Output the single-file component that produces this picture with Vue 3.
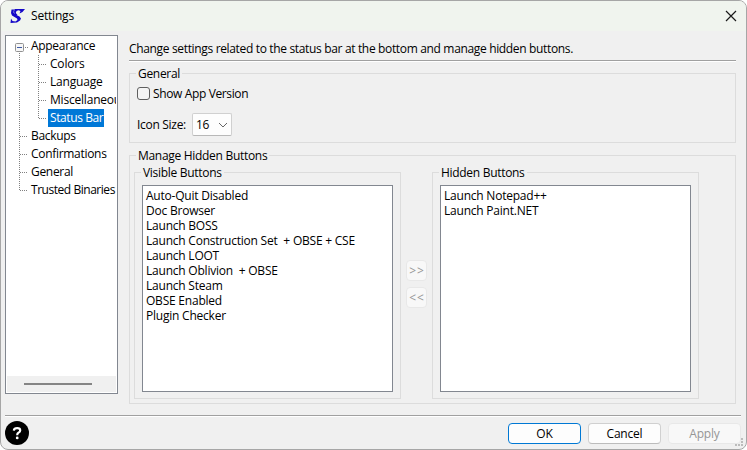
<script setup>
const tree = [
  { label: 'Appearance', level: 0 },
  { label: 'Colors', level: 1 },
  { label: 'Language', level: 1 },
  { label: 'Miscellaneous', level: 1 },
  { label: 'Status Bar', level: 1, selected: true },
  { label: 'Backups', level: 0 },
  { label: 'Confirmations', level: 0 },
  { label: 'General', level: 0 },
  { label: 'Trusted Binaries', level: 0, long: true },
]
const visible = [
  'Auto-Quit Disabled',
  'Doc Browser',
  'Launch BOSS',
  'Launch Construction Set  + OBSE + CSE',
  'Launch LOOT',
  'Launch Oblivion  + OBSE',
  'Launch Steam',
  'OBSE Enabled',
  'Plugin Checker',
]
const hidden = ['Launch Notepad++', 'Launch Paint.NET']
</script>

<template>
  <div class="window">
    <header class="titlebar">
      <svg class="logo" width="16" height="16" viewBox="0 0 16 16">
        <path d="M1.500 1.500H4L3.500 4.500L5.500 6.500L9.500 8.500L11 10.500L10 12.500L7 14.500L0.500 15L1 10.500L2.500 13L5.500 13.500L7.500 12L7 10.500L2 7.500L1 5Z" fill="#1508c8" />
        <path d="M4.500 1H15L12.500 4L9.500 5.500L10.500 3L8.500 2.200L6.500 3L5.800 5L7.500 7L5 7L4 4Z" fill="#1508c8" />
      </svg>
      <span class="caption">Settings</span>
      <svg class="close" width="12" height="12" viewBox="0 0 12 12">
        <path d="M1 1L11 11M11 1L1 11" stroke="#1a1a1a" stroke-width="1.200" fill="none" />
      </svg>
    </header>
    <main class="body">
      <nav class="tree">
        <svg class="lines" width="111" height="170" viewBox="0 0 111 170">
          <g stroke="#808080" stroke-dasharray="1 1" fill="none">
            <path d="M13.500 17V154M19 11.500H22M14 100.500H22M14 118.500H22M14 136.500H22M14 154.500H22" />
            <path d="M32.500 19V82M33 28.500H41M33 46.500H41M33 64.500H41M33 82.500H41" />
          </g>
          <rect x="9.500" y="7.500" width="8" height="8" rx="1" fill="#f7f7f7" stroke="#919191" />
          <path d="M11 11.500H16" stroke="#3d5aa5" />
        </svg>
        <div class="rows">
          <div v-for="n in tree" :key="n.label" class="row" :class="{ child: n.level, selected: n.selected, long: n.long }">
            <span>{{ n.label }}</span>
          </div>
        </div>
        <div class="scroll"><i></i></div>
      </nav>
      <section class="page">
        <p class="intro">Change settings related to the status bar at the bottom and manage hidden buttons.</p>
        <div class="rule"></div>
        <div class="group general">
          <div class="legend">General</div>
          <div class="check"><i></i><span>Show App Version</span></div>
          <div class="size">
            <span>Icon Size:</span>
            <div class="select">
              <span>16</span>
              <svg width="10" height="6" viewBox="0 0 10 6"><path d="M1 1L5 5L9 1" stroke="#666" fill="none" /></svg>
            </div>
          </div>
        </div>
        <div class="group manage">
          <div class="legend">Manage Hidden Buttons</div>
          <div class="columns">
            <div class="group sub">
              <div class="legend">Visible Buttons</div>
              <div class="list"><div v-for="t in visible" :key="t">{{ t }}</div></div>
            </div>
            <div class="movers">
              <button class="btn off">&gt;&gt;</button>
              <button class="btn off">&lt;&lt;</button>
            </div>
            <div class="group sub">
              <div class="legend">Hidden Buttons</div>
              <div class="list"><div v-for="t in hidden" :key="t">{{ t }}</div></div>
            </div>
          </div>
        </div>
      </section>
    </main>
    <div class="rule bottom"></div>
    <footer class="footer">
      <svg class="help" width="24" height="24" viewBox="0 0 24 24">
        <circle cx="12" cy="12" r="12" fill="#000" />
        <path d="M8.800 9.600Q9.200 7.200 12.200 7.200Q15.200 7.200 15.200 9.400Q15.200 10.800 13.400 11.700Q12.200 12.300 12.200 14.300" stroke="#fff" stroke-width="2.200" fill="none" />
        <circle cx="12.200" cy="16.900" r="1.400" fill="#fff" />
      </svg>
      <button class="btn ok">OK</button>
      <button class="btn">Cancel</button>
      <button class="btn off">Apply</button>
    </footer>
    <svg class="grip" width="8" height="8" viewBox="0 0 8 8">
      <path d="M6 0H8V2H6ZM6 3H8V5H6ZM3 6H5V8H3ZM6 6H8V8H6ZM0 6H2V8H0Z" fill="#bcbcbc" />
    </svg>
  </div>
</template>

<style>
body { background: #fff; }
</style>
<style scoped>
* { box-sizing: border-box; }
.window {
  position: relative; width: 747px; height: 450px; overflow: hidden;
  display: flex; flex-direction: column;
  border: 1px solid #a6a6a6; border-radius: 8px; background: #f0f0f0; color: #000;
  font: 12px/16px "Open Sans", "Noto Sans", sans-serif; letter-spacing: -0.3px; white-space: pre;
}
.titlebar { height: 30px; flex: none; display: flex; align-items: center; padding: 0 9px; background: #f0f4ee; }
.caption { margin-left: 5px; flex: 1; letter-spacing: -0.2px; }
.body { display: flex; flex: none; height: 384px; padding: 4px 10px 0 4px; }
.tree { position: relative; width: 113px; height: 359px; border: 1px solid #828790; background: #fff; padding: 1px; display: flex; flex-direction: column; }
.lines { position: absolute; left: 0; top: 0; }
.rows { flex: 1; overflow: hidden; position: relative; }
.row { height: 18px; line-height: 18px; padding-left: 22px; display: flex; }
.row.child { padding-left: 41px; letter-spacing: -0.2px; }
.row span { height: 18px; padding: 0 2px; }
.row.selected { letter-spacing: -0.4px; }
.row.long { letter-spacing: -0.46px; }
.selected span { background: #0078d7; color: #fff; padding-right: 1px; }
.scroll { height: 16px; background: #f0f0f0; display: flex; align-items: center; padding-left: 17px; }
.scroll i { width: 68px; height: 2px; background: #858585; }
.page { margin-left: 11px; flex: 1; display: flex; flex-direction: column; }
.intro { margin: 6px 0 3px; height: 16px; letter-spacing: -0.34px; }
.rule { height: 2px; flex: none; background: #a0a0a0; border-bottom: 1px solid #fff; }
.group { border: 1px solid #dcdcdc; }
.legend { width: fit-content; height: 16px; margin: -8px 0 0 6px; padding: 0 2px; background: #f0f0f0; }
.general { height: 70px; margin-top: 11px; }
.check { display: flex; align-items: flex-start; height: 16px; margin: 4px 0 0 7px; letter-spacing: -0.37px; }
.check i { width: 13px; height: 13px; margin: 1px 3px 0 0; border: 1px solid #5f5f5f; border-radius: 3px; background: #f5f5f5; }
.size { display: flex; align-items: center; margin: 11px 0 0 7px; }
.select { width: 40px; height: 23px; margin-left: 6px; border: 1px solid #d0d0d0; border-bottom-color: #b8b8b8; border-radius: 2px; background: #fdfdfd; display: flex; align-items: center; justify-content: space-between; padding: 0 3px 0 3px; }
.manage { height: 249px; margin-top: 12px; }
.columns { display: flex; margin: 8px 0 0 4px; }
.sub { width: 267px; height: 227px; }
.list { width: 251px; height: 207px; margin: 4px 0 0 7px; padding: 2px 3px; border: 1px solid #828790; background: #fff; line-height: 15px; letter-spacing: -0.22px; }
.movers { width: 31px; padding: 88px 0 0 5px; display: flex; flex-direction: column; gap: 6px; }
.btn { width: 73px; height: 21px; padding: 0; border: 1px solid #d0d0d0; border-bottom-color: #bcbcbc; border-radius: 4px; background: #fdfdfd; font: inherit; letter-spacing: -0.2px; color: #000; }
.btn.ok { border-color: #0078d4; }
.btn.off { border-color: #e8e8e8; background: #f8f8f8; color: #969696; }
.movers .btn { width: 21px; letter-spacing: 1px; padding-left: 1px; }
.bottom { margin: 0 5px 0 4px; }
.footer { flex: 1; display: flex; align-items: flex-start; gap: 7px; padding: 5px 5px 0 4px; }
.footer .btn { margin-top: 1px; line-height: 15px; padding-bottom: 1px; }
.help { margin-right: auto; margin-top: -1px; }
.grip { position: absolute; right: 3px; bottom: 3px; }
</style>
